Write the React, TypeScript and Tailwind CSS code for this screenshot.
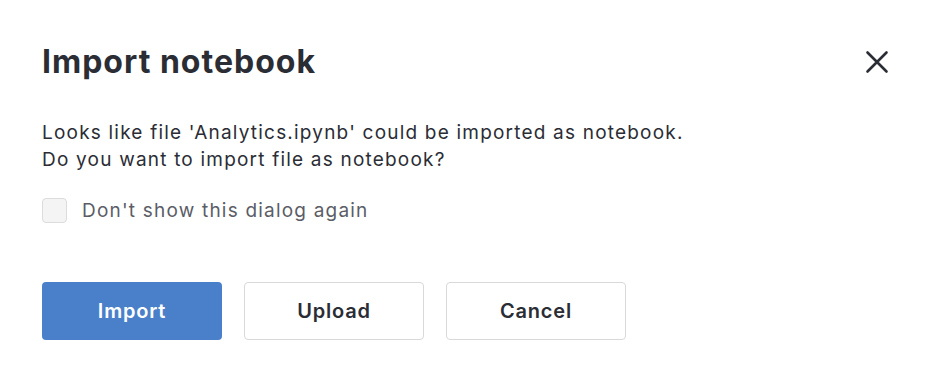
import React from "react";

export default function App() {
  return (
    <div className="w-[934px] h-[378px] bg-white font-[Inter,sans-serif] text-[#2b2d35]">
      <div className="pt-[38px] pl-[42px] pr-[44px]">
        <div className="flex items-center justify-between">
          <h1 className="text-[32px] leading-[48px] font-[650] tracking-[1px] text-[#2b2d35]">Import notebook</h1>
          <button className="w-[24px] h-[24px] flex items-center justify-center mr-[1px]">
            <svg width="24" height="24" viewBox="0 0 24 24" fill="none">
              <path d="M2.5 2.5L21.5 21.5M21.5 2.5L2.5 21.5" stroke="#2b2d35" strokeWidth="2.6" strokeLinecap="round" />
            </svg>
          </button>
        </div>
        <div className="mt-[33px] text-[19px] leading-[27px] tracking-[1.2px] text-[#2b2d35]">
          <p>Looks like file 'Analytics.ipynb' could be imported as notebook.</p>
          <p>Do you want to import file as notebook?</p>
        </div>
        <label className="mt-[24px] flex items-center gap-[15px]">
          <span className="w-[25px] h-[25px] rounded-[4px] border border-[#dcdcdc] bg-[#f4f4f4]"></span>
          <span className="text-[19px] leading-[27px] tracking-[1.2px] text-[#5b5d66]">Don't show this dialog again</span>
        </label>
        <div className="mt-[58px] flex gap-[22px] text-[20px] font-semibold tracking-[0.8px]">
          <button className="w-[180px] h-[58px] rounded-[4px] bg-[#4a80c9] text-white">Import</button>
          <button className="w-[180px] h-[58px] rounded-[4px] border border-[#d9d9d9] bg-white text-[#2b2d35]">Upload</button>
          <button className="w-[180px] h-[58px] rounded-[4px] border border-[#d9d9d9] bg-white text-[#2b2d35]">Cancel</button>
        </div>
      </div>
    </div>
  );
}
